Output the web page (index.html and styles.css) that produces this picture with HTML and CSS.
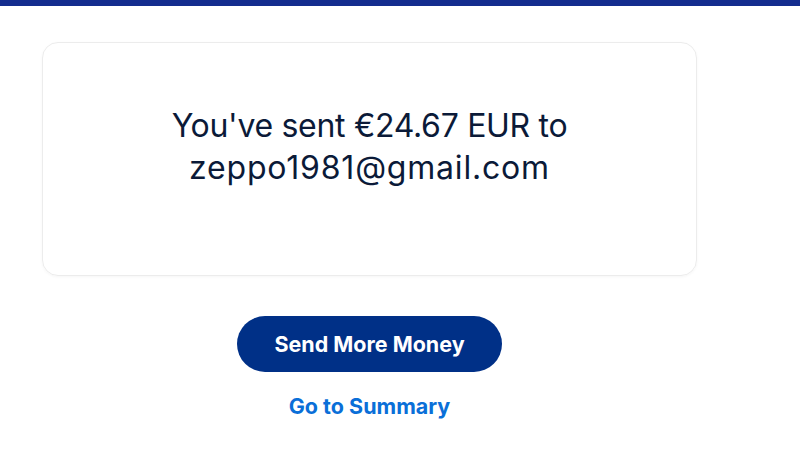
FILE: index.html
```html
<!DOCTYPE html>
<html>
<head>
<meta charset="utf-8">
<link rel="stylesheet" href="styles.css">
</head>
<body>
<div class="topbar"></div>
<main class="page">
  <section class="card">
    <h1 class="message"><span class="line-one">You've sent €24.67 EUR to</span><br><span class="line-two">zeppo1981@gmail.com</span></h1>
  </section>
  <div class="actions">
    <button class="primary">Send More Money</button>
    <a class="link" href="#">Go to Summary</a>
  </div>
</main>
</body>
</html>
```
FILE: styles.css
```css
html, body {
  margin: 0;
  padding: 0;
  background: #ffffff;
  font-family: "Inter", "Liberation Sans", sans-serif;
}
.topbar {
  height: 6px;
  background: #142c8e;
}
.page {
  width: 655px;
  margin-left: 42px;
  padding-top: 36px;
}
.card {
  box-sizing: border-box;
  height: 234px;
  border: 1px solid #ececec;
  border-radius: 16px;
  box-shadow: 0 1px 3px rgba(0,0,0,0.04);
  padding-top: 62px;
}
.message {
  margin: 0;
  text-align: center;
  font-size: 32px;
  font-weight: 400;
  line-height: 42px;
  color: #0b1a38;
}
.line-one {
  letter-spacing: -0.3px;
}
.line-two {
  letter-spacing: 0.8px;
}
.actions {
  display: flex;
  flex-direction: column;
  align-items: center;
  padding-top: 40px;
}
.primary {
  width: 265px;
  height: 56px;
  border: none;
  border-radius: 28px;
  background: #003087;
  color: #ffffff;
  font-family: inherit;
  font-size: 21.5px;
  font-weight: 700;
}
.link {
  margin-top: 21px;
  color: #0a6fd8;
  font-size: 21.5px;
  font-weight: 700;
  text-decoration: none;
}
```
